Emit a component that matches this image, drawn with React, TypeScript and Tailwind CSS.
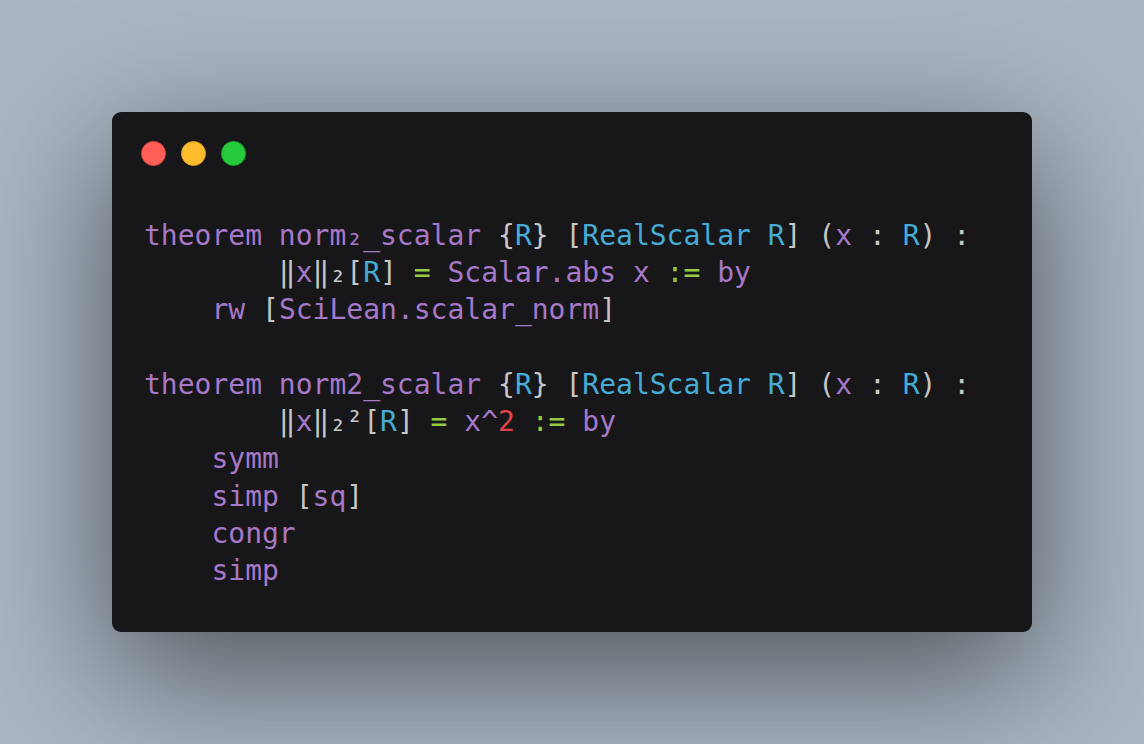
const P = "text-[#a678c8]";
const C = "text-[#46acd6]";
const G = "text-[#98c943]";
const W = "text-[#c6c6c6]";
const Rd = "text-[#e0424b]";

type Tok = [string, string];

const lines: Tok[][] = [
  [["theorem norm₂_scalar ", P], ["{", W], ["R", C], ["} [", W], ["RealScalar R", C], ["] (", W], ["x", P], [" : ", W], ["R", C], [") :", W]],
  [["        ‖", W], ["x", P], ["‖₂[", W], ["R", C], ["] ", W], ["=", G], [" Scalar.abs x ", P], [":=", G], [" by", P]],
  [["    rw ", P], ["[", W], ["SciLean.scalar_norm", P], ["]", W]],
  [],
  [["theorem norm2_scalar ", P], ["{", W], ["R", C], ["} [", W], ["RealScalar R", C], ["] (", W], ["x", P], [" : ", W], ["R", C], [") :", W]],
  [["        ‖", W], ["x", P], ["‖₂²[", W], ["R", C], ["] ", W], ["=", G], [" x^", P], ["2", Rd], [" ", P], [":=", G], [" by", P]],
  [["    symm", P]],
  [["    simp ", P], ["[", W], ["sq", P], ["]", W]],
  [["    congr", P]],
  [["    simp", P]],
];

export default function App() {
  return (
    <div className="w-[1144px] h-[744px] bg-[#a9b5c1] flex items-center justify-center">
      <div className="w-[920px] h-[520px] bg-[#171719] rounded-[9px] shadow-[0_40px_136px_rgba(0,0,0,0.55)] flex flex-col">
        <div className="flex gap-[15px] pl-[29px] pt-[29px]">
          <span className="w-[25px] h-[25px] rounded-full bg-[#ff5f56] border border-[#e0443e]" />
          <span className="w-[25px] h-[25px] rounded-full bg-[#ffbd2e] border border-[#dea123]" />
          <span className="w-[25px] h-[25px] rounded-full bg-[#27c93f] border border-[#1aab29]" />
        </div>
        <pre className="pl-[32px] pt-[51px] text-[28px] leading-[37.24px] font-['DejaVu_Sans_Mono',monospace]">
          {lines.map((l, i) => (
            <div key={i} className="h-[37.24px] whitespace-pre">
              {l.map(([t, c], j) => (
                <span key={j} className={c}>{t}</span>
              ))}
            </div>
          ))}
        </pre>
      </div>
    </div>
  );
}
